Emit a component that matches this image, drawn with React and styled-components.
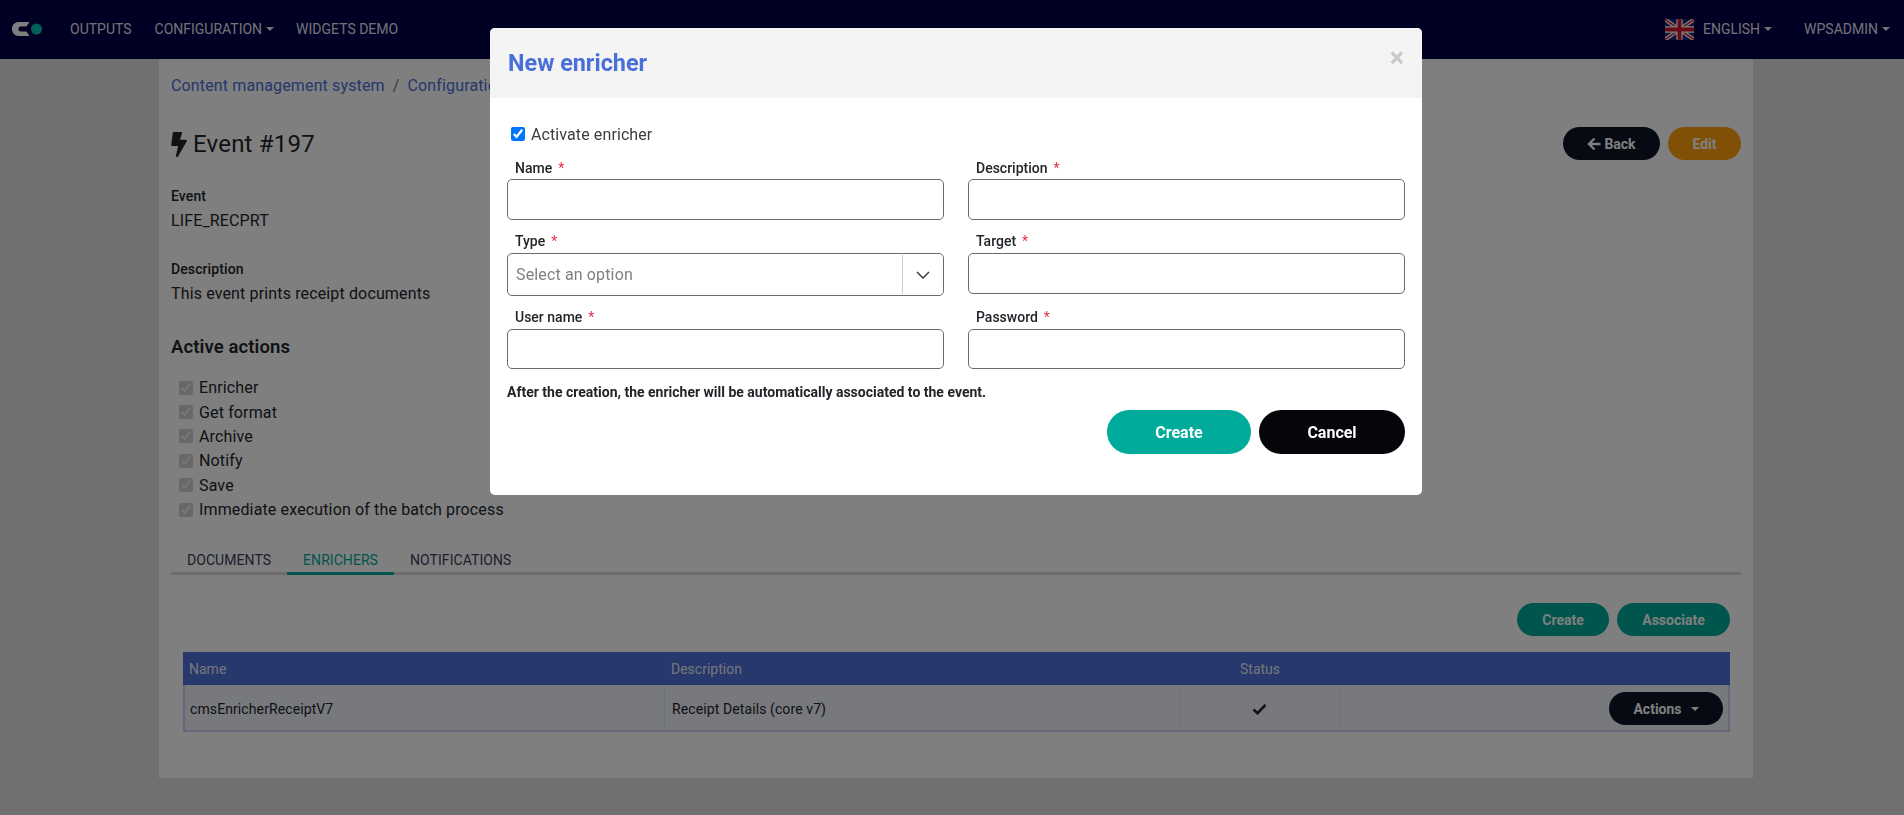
import React from "react";
import styled, { createGlobalStyle } from "styled-components";

const Global = createGlobalStyle`
  html, body { margin: 0; padding: 0; height: 100%; overflow: hidden; }
  body { background: #e0e0e0; font-family: Roboto, "Liberation Sans", sans-serif; color: #212529; font-size: 16px; }
  * { box-sizing: border-box; }
`;

const Navbar = styled.nav`
  height: 59px; background: #000048; display: flex; align-items: center; justify-content: space-between; padding: 0 14px 2px 12px;
`;
const NavGroup = styled.div`display: flex; align-items: center;`;
const FlagSlot = styled.span`display: inline-flex; margin-top: 2px;`;
const NavItem = styled.span`
  color: rgba(255,255,255,.92); font-size: 14px; line-height: 20px; margin-left: ${p => p.$ml || 0}px; display: inline-flex; align-items: center;
`;
const Caret = styled.i`
  display: inline-block; margin-left: ${p => p.$ml || 4}px; border-top: 4px solid currentColor; border-left: 4px solid transparent; border-right: 4px solid transparent;
`;
const Main = styled.main`
  width: 1594px; height: 719px; margin-left: 159px; background: #fff; padding: 0 12px;
`;
const Crumbs = styled.div`
  height: 54px; padding-top: 15px; line-height: 24px; letter-spacing: .14px; color: #212529; display: flex;
  a { color: #4a6fd8; }
  span { margin: 0 8px; color: #6c757d; }
`;
const TitleRow = styled.div`
  display: flex; justify-content: space-between; align-items: flex-start; margin-top: 14px; height: 46px;
`;
const Title = styled.h1`
  margin: 0; font-size: 24px; font-weight: 400; line-height: 35px; letter-spacing: .2px; display: flex; align-items: center; gap: 6px; color: #212529;
`;
const Buttons = styled.div`display: flex; gap: ${p => p.$gap || 8}px; justify-content: flex-end;`;
const Pill = styled.button`
  border: 0; border-radius: 17px; height: 33px; width: ${p => p.$w}px; background: ${p => p.$bg}; color: #fff; font: 700 14px/1 Roboto, sans-serif;
  display: inline-flex; align-items: center; justify-content: center; gap: 3px; padding: 0;
`;
const Field = styled.div`margin-top: ${p => p.$mt}px;`;
const FieldLabel = styled.div`font-size: 14px; font-weight: 500; line-height: 24px; letter-spacing: .1px;`;
const FieldValue = styled.div`font-size: 16px; line-height: 24px; letter-spacing: .14px; margin-top: ${p => p.$mt}px;`;
const Section = styled.h2`margin: 28.5px 0 0; font-size: 18.5px; font-weight: 600; line-height: 26px; letter-spacing: .1px;`;
const Checks = styled.div`margin: 15.5px 0 0 8px;`;
const CheckRow = styled.label`
  display: flex; align-items: center; gap: 6px; height: 24.4px; font-size: 16px; letter-spacing: .14px;
  input { margin: 0; width: 14px; height: 14px; }
`;
const Tabs = styled.div`
  display: flex; margin-top: 25.5px; height: 28px; border-bottom: 3px solid #d8d8d8;
`;
const Tab = styled.div`
  font-size: 14px; line-height: 18px; padding: 4px 16px 0; height: 28px; letter-spacing: .06px; color: ${p => p.$active ? "#00ab9b" : "#3a3f58"};
  border-bottom: 3px solid ${p => p.$active ? "#00ab9b" : "transparent"};
`;
const TabBody = styled.div`padding: 28px 11px 0 12px;`;
const Table = styled.div`margin-top: 16px; width: 1547px;`;
const Row = styled.div`
  display: grid; grid-template-columns: 482px 515px 160px 1fr;
`;
const HeadRow = styled(Row)`background: #4c70d8; height: 33px; color: rgba(255,255,255,.9); font-size: 14px; align-items: center;`;
const BodyRow = styled(Row)`
  background: #f0f2fa; height: 47px; box-shadow: inset 2px 0 #c8cef0, inset -2px 0 #c8cef0, inset 0 -2px #c8cef0; font-size: 14px; letter-spacing: .1px; color: #212529;
`;
const Th = styled.div`padding: 0 6px; text-align: ${p => p.$center ? "center" : "left"};`;
const Td = styled.div`
  padding: 0 ${p => p.$p ?? 6}px 0 ${p => p.$pl ?? 6}px; display: flex; align-items: center; justify-content: ${p => p.$j || "flex-start"};
  border-right: ${p => p.$last ? 0 : "1px solid #dfe2f2"};
`;
const Overlay = styled.div`position: fixed; inset: 0; background: rgba(0,0,0,.5);`;
const Modal = styled.div`
  position: absolute; top: 28px; left: 490px; width: 932px; height: 467px; background: #fff; border-radius: 5px; overflow: hidden;
`;
const ModalHead = styled.header`
  height: 70px; background: #f4f4f4; display: flex; align-items: center; justify-content: space-between; padding: 0 18px;
`;
const ModalTitle = styled.h3`margin: 1px 0 0; color: #4a6fd8; font-size: 23.4px; font-weight: 700; line-height: 1;`;
const Close = styled.span`color: #c9c9c9; font-size: 27px; font-weight: 700; line-height: 1; margin-right: 0; margin-top: -9px;`;
const ModalBody = styled.div`padding: 24px 17px 0;`;
const Activate = styled.label`
  display: flex; align-items: center; gap: 6px; height: 24px; padding-left: 4px; font-size: 16px; letter-spacing: .1px; color: #3a3d42;
  input { margin: 0; width: 14px; height: 14px; }
`;
const Form = styled.div`display: grid; grid-template-columns: 437px 437px; column-gap: 24px; margin-top: 12px;`;
const Group = styled.div`height: ${p => p.$h}px; display: flex; flex-direction: column;`;
const Label = styled.label`
  font-size: 14px; font-weight: 500; line-height: 20px; height: ${p => p.$h}px; padding-top: ${p => p.$pt || 0}px; flex: none; padding-left: 8px; color: #212529;
  b { color: #e8304a; font-weight: 400; margin-left: 6px; }
`;
const Input = styled.input`
  display: block; width: 100%; height: ${p => p.$h || 41}px; flex: none; border: 1px solid #6b6b6b; border-radius: 5px; background: #fff; padding: 0; outline: none;
`;
const Select = styled.div`
  height: 43px; flex: none; border: 1px solid #6b6b6b; border-radius: 5px; display: flex; align-items: stretch; color: #808080;
`;
const SelectText = styled.div`flex: 1; display: flex; align-items: center; padding-left: 7px; font-size: 16px; letter-spacing: .14px; margin-left: 1px;`;
const SelectArrow = styled.div`
  width: 41px; display: flex; align-items: center; justify-content: center; color: #333; border-left: 1px solid #ccc; margin: 1px 0;
`;
const Note = styled.div`font-size: 14px; font-weight: 700; line-height: 20px; margin-top: 13px; color: #212529;`;
const ModalActions = styled.div`display: flex; justify-content: flex-end; gap: 8px; margin-top: 8px;`;
const BigPill = styled.button`
  border: 0; border-radius: 22px; height: 44px; width: ${p => p.$w}px; background: ${p => p.$bg}; color: #fff; font: 700 16px/1 Roboto, sans-serif; padding: 1px 0 0;
`;

const Logo = () => (
  <svg width="30" height="14" viewBox="0 0 30 14" aria-hidden="true">
    <path d="M6.500 0H17.500L14.500 4.500H8.500C7.300 4.500 6.500 5.600 6.500 7s.8 2.500 2 2.500H14.500l3 4.500H6.500C3 14 0 10.800 0 7S3 0 6.500 0Z" fill="#fff"/>
    <circle cx="24.500" cy="7" r="5.500" fill="#00c4ae"/>
  </svg>
);
const Flag = () => (
  <svg width="29" height="21" viewBox="0 0 60 42" aria-hidden="true">
    <rect width="60" height="42" fill="#1a2a78"/>
    <path d="M0 0L60 42M60 0L0 42" stroke="#fff" strokeWidth="8"/>
    <path d="M0 0L60 42M60 0L0 42" stroke="#d0142c" strokeWidth="3"/>
    <path d="M30 0V42M0 21H60" stroke="#fff" strokeWidth="13"/>
    <path d="M30 0V42M0 21H60" stroke="#d0142c" strokeWidth="8"/>
  </svg>
);
const Bolt = () => (
  <svg width="16" height="25" viewBox="0 0 320 512" aria-hidden="true">
    <path d="M296 160H180.600l42.600-129.800C227.200 15 215.700 0 200 0H56C44 0 33.800 8.900 32.200 20.800l-32 240C-1.700 275.200 9.500 288 24 288h118.700L96.600 482.500c-3.600 15.200 8 29.500 23.300 29.500 8.400 0 16.400-4.400 20.800-12l176-304c9.300-15.900-2.200-36-20.700-36z" fill="#212529"/>
  </svg>
);
const Check = () => (
  <svg width="15" height="12" viewBox="0 0 15 12" aria-hidden="true">
    <path d="M1.500 6.500L5.500 10.200L13.500 1.800" fill="none" stroke="#212529" strokeWidth="2.600"/>
  </svg>
);
const Chevron = () => (
  <svg width="14" height="8" viewBox="0 0 14 8" aria-hidden="true">
    <path d="M1 1L7 7L13 1" fill="none" stroke="currentColor" strokeWidth="1.400"/>
  </svg>
);
const ArrowLeft = () => (
  <svg width="14" height="14" viewBox="0 0 14 14" aria-hidden="true">
    <path d="M7.500 1.500L2 7L7.500 12.500M2.500 7H13.500" fill="none" stroke="currentColor" strokeWidth="2.400"/>
  </svg>
);

const actions = ["Enricher", "Get format", "Archive", "Notify", "Save", "Immediate execution of the batch process"];

export default function App() {
  return (
    <>
      <Global />
      <Navbar>
        <NavGroup>
          <Logo />
          <NavItem $ml={28}>OUTPUTS</NavItem>
          <NavItem $ml={23}>CONFIGURATION<Caret /></NavItem>
          <NavItem $ml={22}>WIDGETS DEMO</NavItem>
        </NavGroup>
        <NavGroup>
          <FlagSlot><Flag /></FlagSlot>
          <NavItem $ml={9}>ENGLISH<Caret /></NavItem>
          <NavItem $ml={32}>WPSADMIN<Caret /></NavItem>
        </NavGroup>
      </Navbar>
      <Main>
        <Crumbs>
          <a>Content management system</a><span>/</span><a>Configuration</a>
        </Crumbs>
        <TitleRow>
          <Title><Bolt />Event #197</Title>
          <Buttons>
            <Pill $w={97} $bg="#0c1424"><ArrowLeft />Back</Pill>
            <Pill $w={73} $bg="#ffa00a">Edit</Pill>
          </Buttons>
        </TitleRow>
        <Field $mt={11}>
          <FieldLabel>Event</FieldLabel>
          <FieldValue $mt={1}>LIFE_RECPRT</FieldValue>
        </Field>
        <Field $mt={23.5}>
          <FieldLabel>Description</FieldLabel>
          <FieldValue $mt={1}>This event prints receipt documents</FieldValue>
        </Field>
        <Section>Active actions</Section>
        <Checks>
          {actions.map(a => (
            <CheckRow key={a}><input type="checkbox" checked disabled readOnly />{a}</CheckRow>
          ))}
        </Checks>
        <Tabs>
          <Tab>DOCUMENTS</Tab>
          <Tab $active>ENRICHERS</Tab>
          <Tab>NOTIFICATIONS</Tab>
        </Tabs>
        <TabBody>
          <Buttons>
            <Pill $w={92} $bg="#00ab9b">Create</Pill>
            <Pill $w={113} $bg="#00ab9b">Associate</Pill>
          </Buttons>
          <Table>
            <HeadRow>
              <Th>Name</Th><Th>Description</Th><Th $center>Status</Th><Th />
            </HeadRow>
            <BodyRow>
              <Td $pl={7}>cmsEnricherReceiptV7</Td>
              <Td $pl={7}>Receipt Details (core v7)</Td>
              <Td $j="center"><Check /></Td>
              <Td $last $j="flex-end" $p={7}>
                <Pill $w={114} $bg="#0c1424">Actions<Caret $ml={6} /></Pill>
              </Td>
            </BodyRow>
          </Table>
        </TabBody>
      </Main>
      <Overlay>
        <Modal>
          <ModalHead>
            <ModalTitle>New enricher</ModalTitle>
            <Close>×</Close>
          </ModalHead>
          <ModalBody>
            <Activate><input type="checkbox" defaultChecked />Activate enricher</Activate>
            <Form>
              <Group $h={73}><Label $h={21}>Name<b>*</b></Label><Input /></Group>
              <Group $h={73}><Label $h={21}>Description<b>*</b></Label><Input /></Group>
              <Group $h={75}><Label $h={22}>Type<b>*</b></Label>
                <Select><SelectText>Select an option</SelectText><SelectArrow><Chevron /></SelectArrow></Select>
              </Group>
              <Group $h={75}><Label $h={22}>Target<b>*</b></Label><Input /></Group>
              <Group $h={63}><Label $h={23} $pt={1}>User name<b>*</b></Label><Input $h={40} /></Group>
              <Group $h={63}><Label $h={23} $pt={1}>Password<b>*</b></Label><Input $h={40} /></Group>
            </Form>
            <Note>After the creation, the enricher will be automatically associated to the event.</Note>
            <ModalActions>
              <BigPill $w={144} $bg="#00ab9b">Create</BigPill>
              <BigPill $w={146} $bg="#05060a">Cancel</BigPill>
            </ModalActions>
          </ModalBody>
        </Modal>
      </Overlay>
    </>
  );
}
